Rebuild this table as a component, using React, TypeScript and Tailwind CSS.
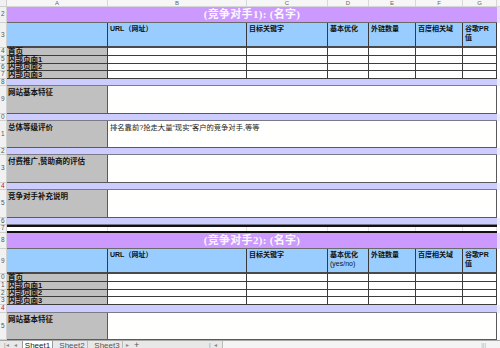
import React from "react";

const FONT = "font-['Liberation_Sans','Noto_Sans_CJK_SC',sans-serif]";

const COLS = [
  { w: "w-[101px]", l: "A" },
  { w: "w-[139px]", l: "B" },
  { w: "w-[81px]", l: "C" },
  { w: "w-[41px]", l: "D" },
  { w: "w-[47px]", l: "E" },
  { w: "w-[47px]", l: "F" },
  { w: "w-[34px]", l: "G" },
];

function RowHead({ n, red }: { n?: string; red?: boolean }) {
  return (
    <div
      className={
        "w-[7px] shrink-0 h-full overflow-hidden flex justify-start items-center pl-[1px] bg-[#f1f1f1] border-r border-b border-[#d0d0d0] text-[6.5px] leading-none " +
        (red ? "text-[#d01010]" : "text-[#555]")
      }
    >
      <span className="whitespace-nowrap">{n ? n.slice(-1) : ""}</span>
    </div>
  );
}

function Rest({ cls = "bg-white" }: { cls?: string }) {
  return <div className={"flex-1 h-full " + cls} />;
}

function ColHeader() {
  return (
    <div className="flex h-[7px]">
      <div className="w-[7px] h-full bg-[#f1f1f1] border-r border-b border-[#cfcfcf]" />
      {COLS.map((c) => (
        <div
          key={c.l}
          className={
            c.w +
            " h-full bg-[#f6f6f6] border-r border-b border-[#d6d6d6] text-[6px] leading-[7px] text-center text-[#666]"
          }
        >
          {c.l}
        </div>
      ))}
      <Rest cls="bg-[#f6f6f6] border-b border-[#d6d6d6]" />
    </div>
  );
}

function TitleRow({ n, num }: { n: string; num: string }) {
  return (
    <div className="flex h-[16px]">
      <RowHead n={n} />
      <div className="w-[490px] h-full bg-[#cc99ff] border-b border-[#6a6a6a] flex items-center justify-center">
        <span className="font-['Liberation_Serif','Noto_Sans_CJK_SC',serif] font-bold text-[11px] leading-none text-[#fbf6ff] tracking-[0.3px]">
          (竞争对手{num}): (名字)
        </span>
      </div>
      <Rest cls="bg-[#e9dcfb]" />
    </div>
  );
}

function HeaderRow({ n, second }: { n: string; second?: boolean }) {
  const base =
    "h-full bg-[#99ccff] border-r border-[#3a3a3a] border-b-2 border-b-[#4a4a4a] text-[7px] font-bold leading-[9px] pl-[2px] pt-[1px] text-[#111] whitespace-nowrap";
  return (
    <div className="flex h-[25px]">
      <RowHead n={n} />
      <div className={"w-[101px] " + base} />
      <div className={"w-[139px] " + base}>URL（网址）</div>
      <div className={"w-[81px] " + base}>目标关键字</div>
      <div className={"w-[41px] " + base}>
        基本优化
        {second ? (
          <>
            <br />
            <span className="font-normal">(yes/no)</span>
          </>
        ) : null}
      </div>
      <div className={"w-[47px] " + base}>外链数量</div>
      <div className={"w-[47px] " + base}>百度相关域</div>
      <div className={"w-[34px] " + base}>
        谷歌PR
        <br />值
      </div>
      <Rest />
    </div>
  );
}

function SmallRow({ n, label, h }: { n: string; label: string; h: string }) {
  return (
    <div className={"flex " + h}>
      <RowHead n={n} />
      <div className="w-[101px] h-full bg-[#c0c0c0] border-r border-b border-[#3c3c3c] text-[7.5px] font-bold leading-none pl-[1px] flex items-center text-[#111] whitespace-nowrap">
        {label}
      </div>
      {COLS.slice(1).map((c) => (
        <div key={c.l} className={c.w + " h-full bg-white border-r border-b border-[#3c3c3c]"} />
      ))}
      <Rest />
    </div>
  );
}

function LavRow({ n, red, h = "h-[7px]" }: { n: string; red?: boolean; h?: string }) {
  return (
    <div className={"flex " + h}>
      <RowHead n={n} red={red} />
      <div className="w-[490px] h-full bg-[#ccccff] border-b border-[#7a7a8a]" />
      <Rest cls="bg-[#ececff]" />
    </div>
  );
}

function BigRow({
  n,
  label,
  h,
  text,
}: {
  n: string;
  label: string;
  h: string;
  text?: string;
}) {
  return (
    <div className={"flex " + h}>
      <RowHead n={n} />
      <div className="w-[101px] h-full bg-[#c0c0c0] border-r border-b border-[#5a5a5a] text-[7.5px] font-bold leading-[9px] pl-[1px] pt-[2px] text-[#111] whitespace-nowrap">
        {label}
      </div>
      <div className="w-[389px] h-full bg-[#fffffd] border-r border-b border-[#5a5a5a] text-[7.3px] leading-[9px] pl-[2px] pt-[2px] text-[#222] whitespace-nowrap">
        {text}
      </div>
      <Rest />
    </div>
  );
}

function SepRow() {
  return (
    <div className="flex h-[8px]">
      <RowHead n="17" />
      <div className="w-[490px] h-full flex border-t-2 border-b-2 border-[#111] bg-white">
        {COLS.map((c) => (
          <div key={c.l} className={c.w + " h-full border-r border-[#e2e2e2]"} />
        ))}
      </div>
      <Rest />
    </div>
  );
}

function TabBar() {
  return (
    <div className="flex h-[8px] bg-[#e8e8e8] border-t border-[#a8a8a8] overflow-hidden text-[8px] leading-[10px] text-[#555]">
      <div className="w-[22px] flex items-start gap-[5px] pl-[4px] pt-[1px] text-[6px] leading-[6px] text-[#888]">
        <span>|◂</span>
        <span>◂</span>
      </div>
      <div className="w-[31px] h-[12px] bg-white border-l border-r border-[#999] text-center text-[#222]">
        Sheet1
      </div>
      <div className="w-[4px]" />
      <div className="w-[31px] h-[12px] bg-[#e8e8e8] border-r border-[#bbb] text-center">Sheet2</div>
      <div className="w-[4px]" />
      <div className="w-[31px] h-[12px] bg-[#e8e8e8] border-r border-[#bbb] text-center">Sheet3</div>
      <div className="w-[14px] flex items-start gap-[5px] pl-[3px] pt-[1px] text-[6px] leading-[6px] text-[#888]">
        <span>▸</span>
        <span className="text-[9px] leading-[7px] text-[#555]">+</span>
      </div>
      <div className="w-[72px]" />
      <div className="w-[13px] flex items-start gap-[3px] pt-[1px] text-[6px] leading-[6px] text-[#888]">
        <span>|</span>
        <span>◂</span>
      </div>
      <div className="flex-1 h-full bg-[#f4f4f4] border-l border-[#bbb] flex justify-end pr-[14px]">
        <span className="text-[6px] leading-[6px] text-[#aaa] pt-[1px]">|||</span>
      </div>
    </div>
  );
}

export default function App() {
  return (
    <div className={"w-[500px] h-[348px] overflow-hidden bg-white flex flex-col " + FONT}>
      <ColHeader />
      <TitleRow n="2" num="1" />
      <HeaderRow n="3" />
      <SmallRow n="4" label="首页" h="h-[8px]" />
      <SmallRow n="5" label="内部页面1" h="h-[8px]" />
      <SmallRow n="6" label="内部页面2" h="h-[7px]" />
      <SmallRow n="7" label="内部页面3" h="h-[8px]" />
      <LavRow n="8" />
      <BigRow n="9" label="网站基本特征" h="h-[28px]" />
      <LavRow n="10" />
      <BigRow
        n="11"
        label="总体等级评价"
        h="h-[27px]"
        text={"排名靠前?抢走大量\u201c现实\u201d客户的竞争对手,等等"}
      />
      <LavRow n="12" />
      <BigRow n="13" label="付费推广,赞助商的评估" h="h-[28px]" />
      <LavRow n="14" red />
      <BigRow n="15" label="竞争对手补充说明" h="h-[28px]" />
      <LavRow n="16" />
      <SepRow />
      <TitleRow n="18" num="2" />
      <HeaderRow n="19" second />
      <SmallRow n="20" label="首页" h="h-[8px]" />
      <SmallRow n="21" label="内部页面1" h="h-[8px]" />
      <SmallRow n="22" label="内部页面2" h="h-[7px]" />
      <SmallRow n="23" label="内部页面3" h="h-[8px]" />
      <LavRow n="24" red h="h-[8px]" />
      <BigRow n="25" label="网站基本特征" h="h-[27px]" />
      <TabBar />
    </div>
  );
}
